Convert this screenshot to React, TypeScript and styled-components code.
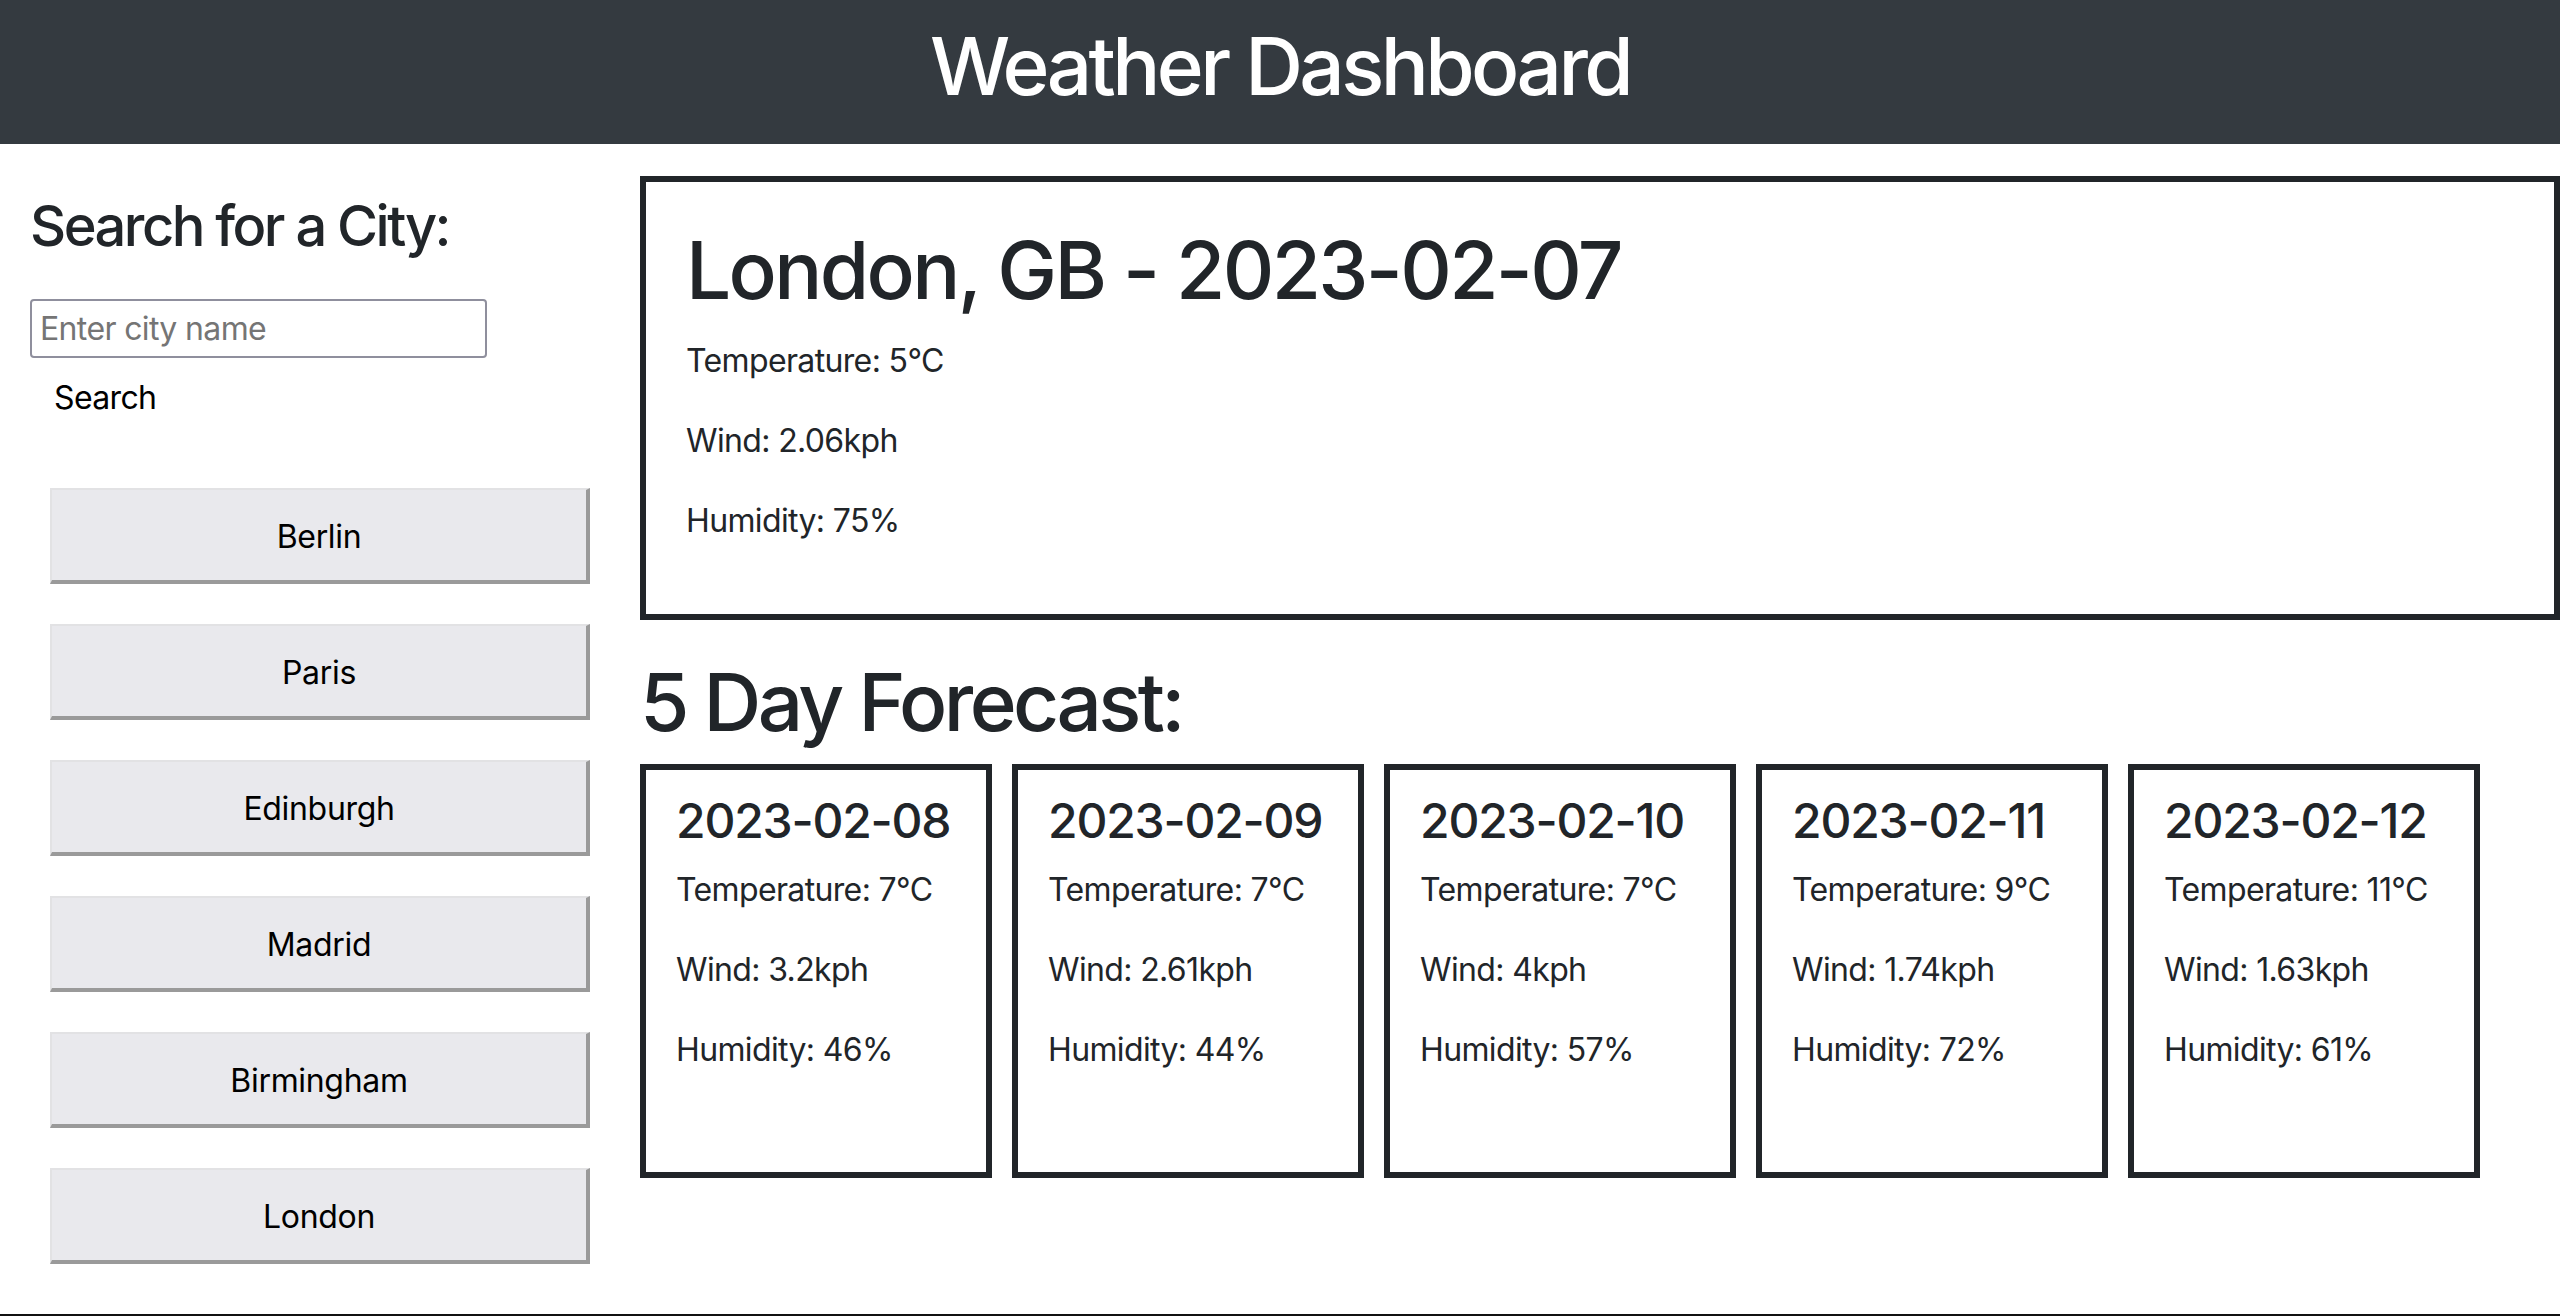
import React from "react";
import styled, { createGlobalStyle } from "styled-components";

const GlobalStyle = createGlobalStyle`
  html, body {
    margin: 0;
    padding: 0;
    background: #fff;
  }

  body {
    font-family: Inter, "Liberation Sans", sans-serif;
    font-size: 32px;
    line-height: 1.5;
    letter-spacing: -0.02em;
    color: #212529;
  }

  *, *::before, *::after {
    box-sizing: border-box;
  }
`;

const Header = styled.header`
  background-color: #343a40;
  height: 144px;
  padding-top: 18px;
  text-align: center;

  h1 {
    margin: 0;
    color: #fff;
    font-size: 80px;
    font-weight: 500;
    line-height: 1.2;
    letter-spacing: -0.045em;
  }
`;

const Layout = styled.div`
  display: flex;
  min-height: 1170px;
`;

const Sidebar = styled.aside`
  width: 640px;
  flex-shrink: 0;
  padding-left: 30px;
  display: flex;
  flex-direction: column;
  align-items: flex-start;
`;

const SideTitle = styled.h3`
  margin: 49px 0 0;
  font-size: 56px;
  font-weight: 500;
  line-height: 1.2;
  letter-spacing: -0.045em;
`;

const CityInput = styled.input`
  margin-top: 39px;
  width: 457px;
  height: 59px;
  padding: 0 8px;
  border: 2px solid #8f8f9d;
  border-radius: 4px;
  font-family: inherit;
  font-size: 32px;
  letter-spacing: -0.02em;
  color: #212529;

  &::placeholder {
    color: #757575;
  }
`;

const SearchButton = styled.button`
  margin-top: 2px;
  padding: 12px 22px;
  border: 2px solid transparent;
  background: transparent;
  font-family: inherit;
  font-size: 32px;
  line-height: 1.5;
  letter-spacing: -0.02em;
  color: #000;
  cursor: pointer;
`;

const CityList = styled.div`
  margin: 52px 0 0 20px;
  display: flex;
  flex-direction: column;
  gap: 40px;
`;

const CityButton = styled.button`
  width: 540px;
  height: 96px;
  padding-top: 4px;
  background-color: #e9e9ed;
  border-style: solid;
  border-width: 2px 4px 4px 2px;
  border-color: #e2e2e4 #9a9a9a #9a9a9a #e2e2e4;
  font-family: inherit;
  font-size: 32px;
  letter-spacing: -0.01em;
  color: #000;
  cursor: pointer;
`;

const Main = styled.main`
  flex: 1;
  min-width: 0;
  padding-top: 32px;
`;

const CurrentBox = styled.section`
  height: 444px;
  padding: 40px;
  border: 6px solid #212529;
`;

const CityHeading = styled.h1`
  margin: 0 0 19px;
  font-size: 80px;
  font-weight: 500;
  line-height: 1.2;
  letter-spacing: -0.033em;
`;

const Stat = styled.p`
  margin: 0 0 32px;
`;

const ForecastTitle = styled.h2`
  margin: 34px 0 14px;
  font-size: 80px;
  font-weight: 500;
  line-height: 1.2;
  letter-spacing: -0.045em;
`;

const ForecastRow = styled.div`
  display: flex;
  gap: 20px;
`;

const ForecastCard = styled.article`
  width: 352px;
  height: 414px;
  padding: 22px 24px 20px 30px;
  border: 6px solid #212529;
`;

const CardDate = styled.h4`
  margin: 0 0 16px;
  font-size: 48px;
  font-weight: 500;
  line-height: 1.2;
  letter-spacing: -0.025em;
  white-space: nowrap;
`;

const Footer = styled.footer`
  border-top: 2px solid #111;
  height: 40px;
`;

const cities = ["Berlin", "Paris", "Edinburgh", "Madrid", "Birmingham", "London"];

const forecast = [
  { date: "2023-02-08", temp: 7, wind: "3.2", humidity: 46 },
  { date: "2023-02-09", temp: 7, wind: "2.61", humidity: 44 },
  { date: "2023-02-10", temp: 7, wind: "4", humidity: 57 },
  { date: "2023-02-11", temp: 9, wind: "1.74", humidity: 72 },
  { date: "2023-02-12", temp: 11, wind: "1.63", humidity: 61 },
];

const App: React.FC = () => {
  return (
    <>
      <GlobalStyle />
      <Header>
        <h1>Weather Dashboard</h1>
      </Header>
      <Layout>
        <Sidebar>
          <SideTitle>Search for a City:</SideTitle>
          <CityInput type="text" placeholder="Enter city name" />
          <SearchButton type="button">Search</SearchButton>
          <CityList>
            {cities.map((city) => (
              <CityButton key={city} type="button">
                {city}
              </CityButton>
            ))}
          </CityList>
        </Sidebar>
        <Main>
          <CurrentBox>
            <CityHeading>London, GB - 2023-02-07</CityHeading>
            <Stat>Temperature: 5°C</Stat>
            <Stat>Wind: 2.06kph</Stat>
            <Stat>Humidity: 75%</Stat>
          </CurrentBox>
          <ForecastTitle>5 Day Forecast:</ForecastTitle>
          <ForecastRow>
            {forecast.map((day) => (
              <ForecastCard key={day.date}>
                <CardDate>{day.date}</CardDate>
                <Stat>Temperature: {day.temp}°C</Stat>
                <Stat>Wind: {day.wind}kph</Stat>
                <Stat>Humidity: {day.humidity}%</Stat>
              </ForecastCard>
            ))}
          </ForecastRow>
        </Main>
      </Layout>
      <Footer />
    </>
  );
};

export default App;
